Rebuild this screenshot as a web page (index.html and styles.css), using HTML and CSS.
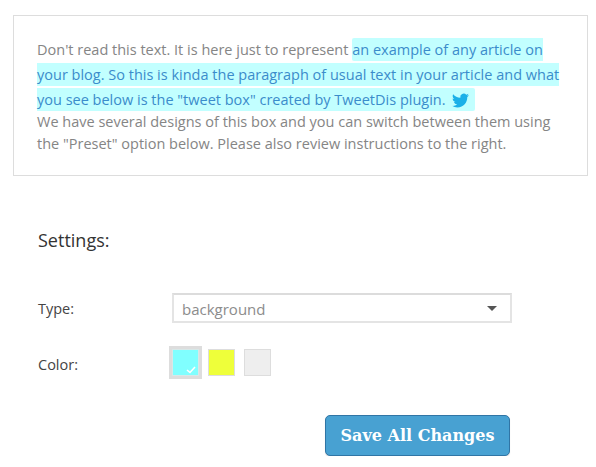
FILE: index.html
```html
<!DOCTYPE html>
<html lang="en">
<head>
  <meta charset="UTF-8">
  <meta name="viewport" content="width=device-width, initial-scale=1.0">
  <title>TweetDis Settings</title>
  <link rel="stylesheet" href="styles.css">
</head>
<body>

  <!-- Article preview -->
  <div class="preview">
    <div class="preview-text">Don't read this text. It is here just to represent <span class="tweet">an example of any article on your blog. So this is kinda the paragraph of usual text in your article and what you see below is the "tweet box" created by TweetDis plugin. <svg class="bird" viewBox="0 0 24 24" width="17" height="17"><path fill="#1cb0e8" d="M23.95 4.57a10 10 0 0 1-2.82.77 4.96 4.96 0 0 0 2.16-2.72c-.95.55-2 .95-3.12 1.19a4.92 4.92 0 0 0-8.38 4.48C7.69 8.1 4.07 6.13 1.64 3.16a4.82 4.82 0 0 0-.67 2.48c0 1.71.87 3.21 2.19 4.1a4.9 4.9 0 0 1-2.23-.62v.06a4.92 4.92 0 0 0 3.95 4.83 5 5 0 0 1-2.21.08 4.94 4.94 0 0 0 4.6 3.42A9.87 9.87 0 0 1 0 19.54a14 14 0 0 0 7.56 2.21c9.05 0 14-7.5 14-13.98 0-.21 0-.42-.02-.63a9.94 9.94 0 0 0 2.41-2.57z"/></svg>&nbsp;</span></div>
    <div class="preview-text">We have several designs of this box and you can switch between them using the "Preset" option below. Please also review instructions to the right.</div>
  </div>

  <!-- Settings form -->
  <div class="settings">
    <h2>Settings:</h2>

    <div class="row row-type">
      <span class="label">Type:</span>
      <div class="select">background<span class="arrow"></span></div>
    </div>

    <div class="row row-color">
      <span class="label">Color:</span>
      <div class="swatches">
        <div class="swatch-on">
          <div class="swatch cyan">
            <svg class="check" viewBox="0 0 10 8" width="10" height="8"><path d="M1 4l3 2.5L9 1" fill="none" stroke="#fff" stroke-width="1.6"/></svg>
          </div>
        </div>
        <div class="swatch yellow"></div>
        <div class="swatch grey"></div>
      </div>
    </div>

    <div class="actions">
      <button class="btn" type="button">Save All Changes</button>
    </div>
  </div>

</body>
</html>
```

FILE: styles.css
```css
body {
  margin: 0;
  padding: 15px 8px 0 13px;
  background-color: #fff;
  font-family: "Open Sans", sans-serif;
  font-size: 14.5px;
  color: #444;
}
.preview {
  box-sizing: border-box;
  width: 575px;
  height: 161px;
  padding: 21px 23px 0;
  border: 1px solid #ddd;
}
.preview-text {
  color: #858585;
  line-height: 22px;
}
.preview-text:first-child {
  line-height: 25px;
  margin-bottom: -1px;
}
.tweet {
  padding: 2px 0;
  background-color: #c2ffff;
  color: #3b8ccb;
  border-radius: 2px;
}
.bird {
  vertical-align: -4px;
  margin-left: 3px;
  margin-right: 2px;
}
.settings {
  padding: 53px 0 0 25px;
}
h2 {
  margin: 0;
  font-size: 18px;
  font-weight: 500;
  line-height: 22px;
  color: #333;
}
.row {
  display: flex;
  align-items: center;
}
.row-type {
  margin-top: 42px;
}
.row-color {
  margin-top: 23px;
}
.label {
  width: 134px;
}
.row-color .label {
  padding-top: 3px;
}
.select {
  box-sizing: border-box;
  display: flex;
  justify-content: space-between;
  align-items: center;
  width: 340px;
  height: 30px;
  padding: 1px 13px 0 8px;
  border: 2px solid #e4e4e4;
  border-top-color: #dcdcdc;
  color: #8c8c8c;
  font-size: 15px;
}
.arrow {
  width: 0;
  height: 0;
  border-left: 5px solid transparent;
  border-right: 5px solid transparent;
  border-top: 5px solid #555;
}
.swatches {
  display: flex;
  align-items: center;
  gap: 9px;
  margin-left: -3px;
}
.swatch-on {
  padding: 3px;
  margin-right: -3px;
  background-color: #ddd;
}
.swatch {
  box-sizing: border-box;
  position: relative;
  width: 27px;
  height: 27px;
  border: 1px solid #ddd;
}
.swatch-on .swatch {
  border: 1px solid #d8e8e8;
}
.cyan {
  background-color: #80ffff;
}
.yellow {
  background-color: #eeff3a;
}
.grey {
  background-color: #eee;
}
.check {
  position: absolute;
  right: 2px;
  bottom: 1px;
}
.actions {
  margin-top: 36px;
  padding-left: 287px;
}
.btn {
  width: 185px;
  height: 41px;
  padding: 0;
  background-color: #48a1d2;
  border: 1px solid #3075a5;
  border-radius: 5px;
  box-shadow: 0 1px 1px rgba(0, 0, 0, 0.15);
  color: #fff;
  font-family: "DejaVu Serif", serif;
  font-size: 16px;
  font-weight: bold;
  cursor: pointer;
}
```
